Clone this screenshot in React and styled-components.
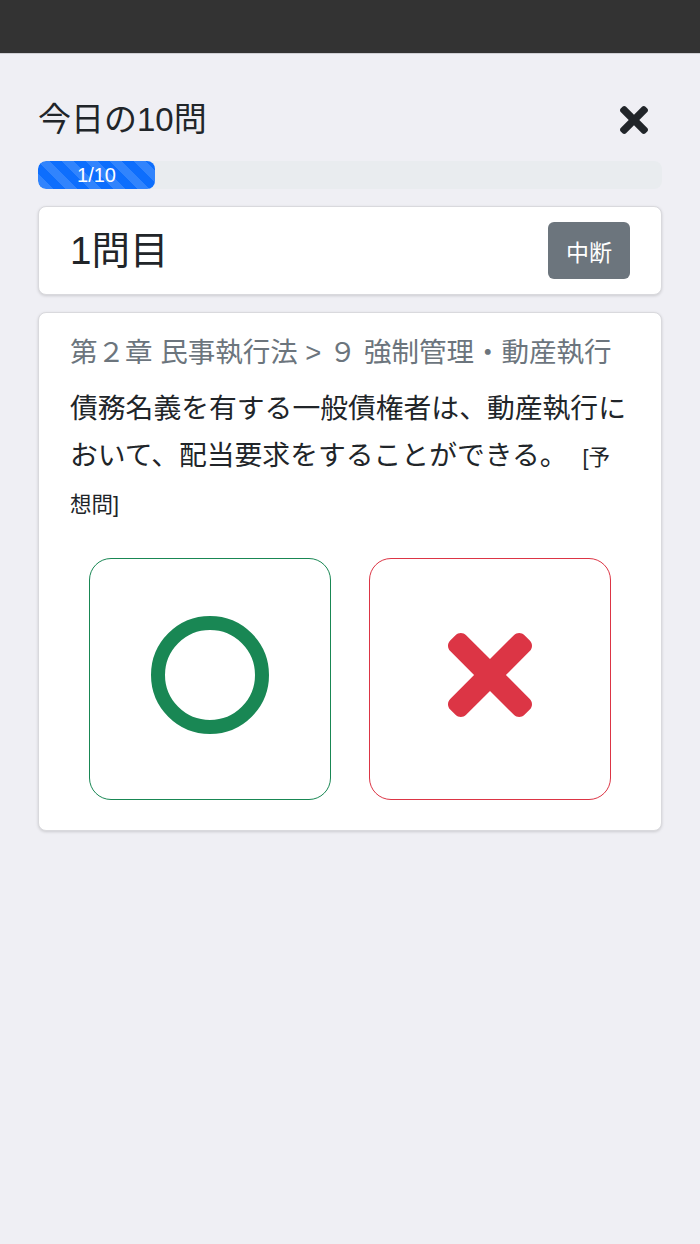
import styled, { createGlobalStyle } from "styled-components";

const GlobalStyle = createGlobalStyle`
  body {
    margin: 0;
    background-color: #efeff4;
    font-family: "Liberation Sans", "Noto Sans CJK JP", sans-serif;
    color: #212529;
  }
`;

const XMarkIcon = ({ size, color }) => (
  <svg width={size} height={size} viewBox="0 80 352 352" fill={color}>
    <path d="M242.72 256l100.07-100.07c12.28-12.28 12.28-32.19 0-44.48l-22.24-22.24c-12.28-12.28-32.19-12.28-44.48 0L176 189.28 75.93 89.21c-12.28-12.28-32.19-12.28-44.48 0L9.21 111.45c-12.28 12.28-12.28 32.19 0 44.48L109.28 256 9.21 356.07c-12.28 12.28-12.28 32.19 0 44.48l22.24 22.24c12.28 12.28 32.2 12.28 44.48 0L176 322.72l100.07 100.07c12.28 12.28 32.2 12.28 44.48 0l22.24-22.24c12.28-12.28 12.28-32.19 0-44.48L242.72 256z" />
  </svg>
);

const CircleIcon = ({ size, color }) => (
  <svg width={size} height={size} viewBox="0 0 118 118">
    <circle cx="59" cy="59" r="52" fill="none" stroke={color} strokeWidth="14" />
  </svg>
);

const App = () => {
  const current = 1;
  const total = 10;

  return (
    <>
      <GlobalStyle />
      <TopBar />
      <Main>
        <Header>
          <Title>今日の10問</Title>
          <CloseButton type="button">
            <XMarkIcon size={28} color="#212529" />
          </CloseButton>
        </Header>

        <Progress>
          <ProgressBar $width="18.75%">
            {current}/{total}
          </ProgressBar>
        </Progress>

        <Card>
          <CounterRow>
            <Counter>{current}問目</Counter>
            <StopButton type="button">中断</StopButton>
          </CounterRow>
        </Card>

        <QuestionCard>
          <Category>第２章 民事執行法 &gt; ９ 強制管理・動産執行</Category>
          <Question>
            債務名義を有する一般債権者は、動産執行において、配当要求をすることができる。
            <Tag>[予想問]</Tag>
          </Question>
          <Choices>
            <Choice type="button" $color="#198754">
              <CircleIcon size={118} color="#198754" />
            </Choice>
            <Choice type="button" $color="#dc3545">
              <XMarkIcon size={84} color="#dc3545" />
            </Choice>
          </Choices>
        </QuestionCard>
      </Main>
    </>
  );
};

const TopBar = styled.div`
  height: 53px;
  background-color: #333333;
  border-bottom: 1px solid #cfcfd4;
`;

const Main = styled.main`
  padding: 41px 38px 0;
  display: flex;
  flex-direction: column;
`;

const Header = styled.div`
  display: flex;
  justify-content: space-between;
  align-items: center;
  margin-bottom: 16px;
`;

const Title = styled.h1`
  margin: 0;
  font-size: 33px;
  font-weight: normal;
  line-height: 50px;
`;

const CloseButton = styled.button`
  display: flex;
  align-items: center;
  justify-content: center;
  margin-right: 14px;
  padding: 0;
  border: none;
  background: none;
  cursor: pointer;
`;

const Progress = styled.div`
  height: 28px;
  background-color: #e9ecef;
  border-radius: 8px;
  overflow: hidden;
  display: flex;
  margin-bottom: 17px;
`;

const ProgressBar = styled.div`
  width: ${(p) => p.$width};
  display: flex;
  align-items: center;
  justify-content: center;
  background-color: #0d6efd;
  background-image: linear-gradient(
    45deg,
    rgba(255, 255, 255, 0.15) 25%,
    transparent 25%,
    transparent 50%,
    rgba(255, 255, 255, 0.15) 50%,
    rgba(255, 255, 255, 0.15) 75%,
    transparent 75%,
    transparent
  );
  background-size: 24px 24px;
  border-radius: 8px;
  color: #ffffff;
  font-size: 20px;
`;

const Card = styled.div`
  background-color: #ffffff;
  border: 1px solid #d9d9dd;
  border-radius: 8px;
  box-shadow: 0 1px 3px rgba(0, 0, 0, 0.15);
  margin-bottom: 17px;
`;

const CounterRow = styled.div`
  display: flex;
  justify-content: space-between;
  align-items: center;
  padding: 15px 31px;
`;

const Counter = styled.div`
  font-size: 38.5px;
  line-height: 57px;
`;

const StopButton = styled.button`
  height: 57px;
  padding: 0 18px;
  border: none;
  border-radius: 6px;
  background-color: #6c757d;
  color: #ffffff;
  font-family: inherit;
  font-size: 23px;
  cursor: pointer;
`;

const QuestionCard = styled(Card)`
  padding: 16px 31px 30px;
`;

const Category = styled.div`
  color: #6c757d;
  font-size: 27.5px;
  line-height: 47px;
  margin-bottom: 9px;
`;

const Question = styled.p`
  margin: 0;
  font-size: 27.8px;
  line-height: 47px;
`;

const Tag = styled.span`
  margin-left: 15px;
  font-size: 21.5px;
  line-height: 1;
`;

const Choices = styled.div`
  display: grid;
  grid-template-columns: 1fr 1fr;
  justify-items: center;
  margin-top: 32px;
`;

const Choice = styled.button`
  width: 242px;
  height: 242px;
  display: flex;
  align-items: center;
  justify-content: center;
  padding: 0 0 9px;
  background-color: #ffffff;
  border: 1.5px solid ${(p) => p.$color};
  border-radius: 22px;
  cursor: pointer;
`;

export default App;
